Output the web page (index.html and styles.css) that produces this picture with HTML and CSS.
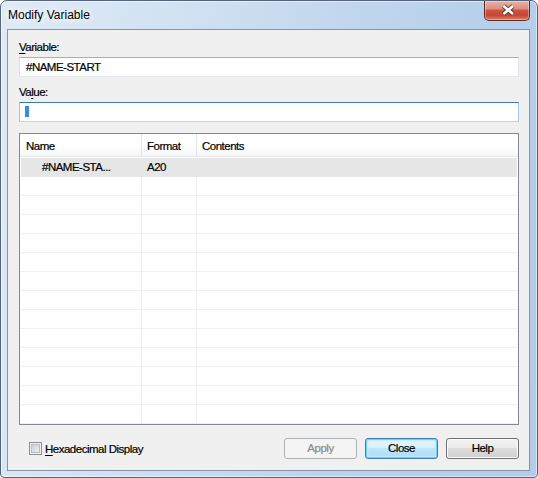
FILE: index.html
```html
<!DOCTYPE html>
<html>
<head>
<meta charset="utf-8">
<title>Modify Variable</title>
<link rel="stylesheet" href="styles.css">
</head>
<body>
<div class="window">
  <div class="titlebar">
    <span class="title">Modify Variable</span>
    <div class="close-btn">
      <svg width="44" height="19" viewBox="0 0 44 19">
        <path d="M18.5 5 L28 13 M28 5 L18.5 13" stroke="#3b2321" stroke-width="4.6" stroke-opacity="0.75" fill="none"/>
        <path d="M18.5 5 L28 13 M28 5 L18.5 13" stroke="#ffffff" stroke-width="2.6" fill="none"/>
      </svg>
    </div>
  </div>
  <div class="client">
    <div class="lbl"><u>V</u>ariable:</div>
    <div class="input">#NAME-START</div>
    <div class="lbl lbl2">Va<u>l</u>ue:</div>
    <div class="input focus"><span class="sel"></span></div>
    <div class="table">
      <div class="thead">
        <div class="hc c1">Name</div>
        <div class="hc c2">Format</div>
        <div class="hc c3">Contents</div>
      </div>
      <div class="tbody">
        <div class="row selected">
          <div class="cell c1 name">#NAME-STA...</div>
          <div class="cell c2">A20</div>
          <div class="cell c3"></div>
        </div>
        <div class="row"><div class="cell c1"></div><div class="cell c2"></div><div class="cell c3"></div></div>
        <div class="row"><div class="cell c1"></div><div class="cell c2"></div><div class="cell c3"></div></div>
        <div class="row"><div class="cell c1"></div><div class="cell c2"></div><div class="cell c3"></div></div>
        <div class="row"><div class="cell c1"></div><div class="cell c2"></div><div class="cell c3"></div></div>
        <div class="row"><div class="cell c1"></div><div class="cell c2"></div><div class="cell c3"></div></div>
        <div class="row"><div class="cell c1"></div><div class="cell c2"></div><div class="cell c3"></div></div>
        <div class="row"><div class="cell c1"></div><div class="cell c2"></div><div class="cell c3"></div></div>
        <div class="row"><div class="cell c1"></div><div class="cell c2"></div><div class="cell c3"></div></div>
        <div class="row"><div class="cell c1"></div><div class="cell c2"></div><div class="cell c3"></div></div>
        <div class="row"><div class="cell c1"></div><div class="cell c2"></div><div class="cell c3"></div></div>
        <div class="row"><div class="cell c1"></div><div class="cell c2"></div><div class="cell c3"></div></div>
        <div class="row"><div class="cell c1"></div><div class="cell c2"></div><div class="cell c3"></div></div>
        <div class="row"><div class="cell c1"></div><div class="cell c2"></div><div class="cell c3"></div></div>
      </div>
    </div>
    <div class="footer">
      <div class="check"><span class="box"></span><span><u>H</u>exadecimal Display</span></div>
      <div class="buttons">
        <div class="btn disabled">Apply</div>
        <div class="btn default">Close</div>
        <div class="btn">Help</div>
      </div>
    </div>
  </div>
</div>
</body>
</html>
```

FILE: styles.css
```css
* { box-sizing: border-box; }
html, body { margin: 0; padding: 0; }
body {
  width: 538px;
  height: 478px;
  overflow: hidden;
  background: #ffffff;
  font-family: "Liberation Sans", Arial, sans-serif;
  font-size: 11.5px;
  letter-spacing: -0.5px;
  color: #000;
}
u { text-decoration: underline; text-underline-offset: 2px; }

.window {
  width: 538px;
  height: 478px;
  border: 1px solid #55647a;
  border-radius: 7px 7px 4px 4px;
  background: linear-gradient(100deg, #dfeaf6 0%, #d2e2f3 28%, #c2d7ee 55%, #b7cfea 80%, #b3cce8 100%);
  box-shadow: inset 0 0 0 1px rgba(255,255,255,0.5);
  padding: 0 7px 6px 6px;
  display: flex;
  flex-direction: column;
}

.titlebar {
  height: 29px;
  display: flex;
  align-items: flex-start;
}
.title {
  margin-top: 7px;
  margin-left: 1px;
  font-size: 12px;
  letter-spacing: 0;
  line-height: 15px;
  color: #000;
  text-shadow: 0 0 6px #fff, 0 0 10px #fff, 0 0 14px #fff;
}
.close-btn {
  margin-left: auto;
  width: 46px;
  height: 20px;
  border: 1px solid #5b2b26;
  border-top: none;
  border-radius: 0 0 5px 5px;
  background: linear-gradient(#eab2a6 0%, #de8f80 40%, #cd5440 50%, #c54631 75%, #d9806a 100%);
  box-shadow: inset 0 0 0 1px rgba(255,255,255,0.35);
  display: flex;
  align-items: center;
  justify-content: center;
}
.close-btn svg { display: block; }

.client {
  flex: 1;
  background: #f0f0f0;
  border: 1px solid #8495ab;
  padding: 8px 10px 11px 11px;
  display: flex;
  flex-direction: column;
  -webkit-text-stroke-width: 0.2px;
}

.lbl {
  height: 16px;
  padding-top: 3px;
  line-height: 13px;
  margin-bottom: 3px;
}
.lbl2 { margin-top: 6px; }

.input {
  height: 20px;
  background: #fff;
  border: 1px solid;
  border-color: #abadb3 #e2e3ea #e3e9ef #dbdfe6;
  padding-left: 6px;
  padding-top: 1px;
  line-height: 17px;
}
.input.focus {
  border-color: #3d7bad #a4c9e3 #b7d9ed #a4c9e3;
  padding-top: 0;
}
.sel {
  display: block;
  width: 4px;
  height: 11px;
  margin: 3px 0 0 -1px;
  background: #3a8ee0;
}

.table {
  margin-top: 11px;
  flex: 1;
  border: 1px solid #828790;
  background: #fff;
  overflow: hidden;
  display: flex;
  flex-direction: column;
}
.thead {
  display: flex;
  height: 23px;
  flex: none;
  border-bottom: 1px solid #e7e8ea;
  background: linear-gradient(#ffffff 0%, #ffffff 55%, #f4f5f6 100%);
}
.hc {
  padding-top: 2px;
  line-height: 20px;
  border-right: 1px solid #e3e4e6;
}
.c1 { width: 122px; flex: none; padding-left: 6px; }
.c2 { width: 55px; flex: none; padding-left: 5px; }
.c3 { flex: 1; padding-left: 5px; border-right: none; }

.tbody { padding-top: 1px; }
.row {
  display: flex;
  height: 19px;
  border-bottom: 1px solid #f0f0f0;
}
.cell {
  line-height: 18px;
  border-right: 1px solid #f0f0f0;
}
.cell.c3 { border-right: none; }
.row.selected {
  background: #e6e6e6;
  margin: 0 1px;
  border-bottom-color: #e6e6e6;
}
.row.selected .cell { border-right-color: transparent; }
.row.selected .c1 { width: 121px; }
.name { padding-left: 21px; }

.footer {
  margin-top: 13px;
  height: 21px;
  flex: none;
  display: flex;
  align-items: center;
}
.check {
  margin-left: 10px;
  display: flex;
  align-items: center;
  gap: 3px;
}
.box {
  width: 13px;
  height: 13px;
  border: 1px solid #8f8d8d;
  background: linear-gradient(135deg, #c6c9ce 0%, #e2e3e5 60%, #f3f3f3 100%);
  box-shadow: inset 0 0 0 1px #f2f2f2, inset 0 0 0 2px #b9bcc1;
}
.buttons {
  margin-left: auto;
  display: flex;
  gap: 8px;
}
.btn {
  width: 73px;
  height: 21px;
  border: 1px solid #707070;
  border-radius: 3px;
  text-align: center;
  line-height: 19px;
  background: linear-gradient(#f2f2f2 0%, #ebebeb 50%, #dddddd 50%, #cfcfcf 100%);
  box-shadow: inset 0 0 0 1px #fbfbfb;
}
.btn.disabled {
  border-color: #adb2b5;
  background: #f4f4f4;
  color: #8a8a8a;
  box-shadow: none;
}
.btn.default {
  border-color: #3c7fb1;
  background: linear-gradient(#e8f6fd 0%, #d8effc 50%, #bfe6fb 50%, #a9dbf6 100%);
  box-shadow: inset 0 0 0 1px #6fd0f5, inset 0 0 2px 2px #bfeafc;
}
```
